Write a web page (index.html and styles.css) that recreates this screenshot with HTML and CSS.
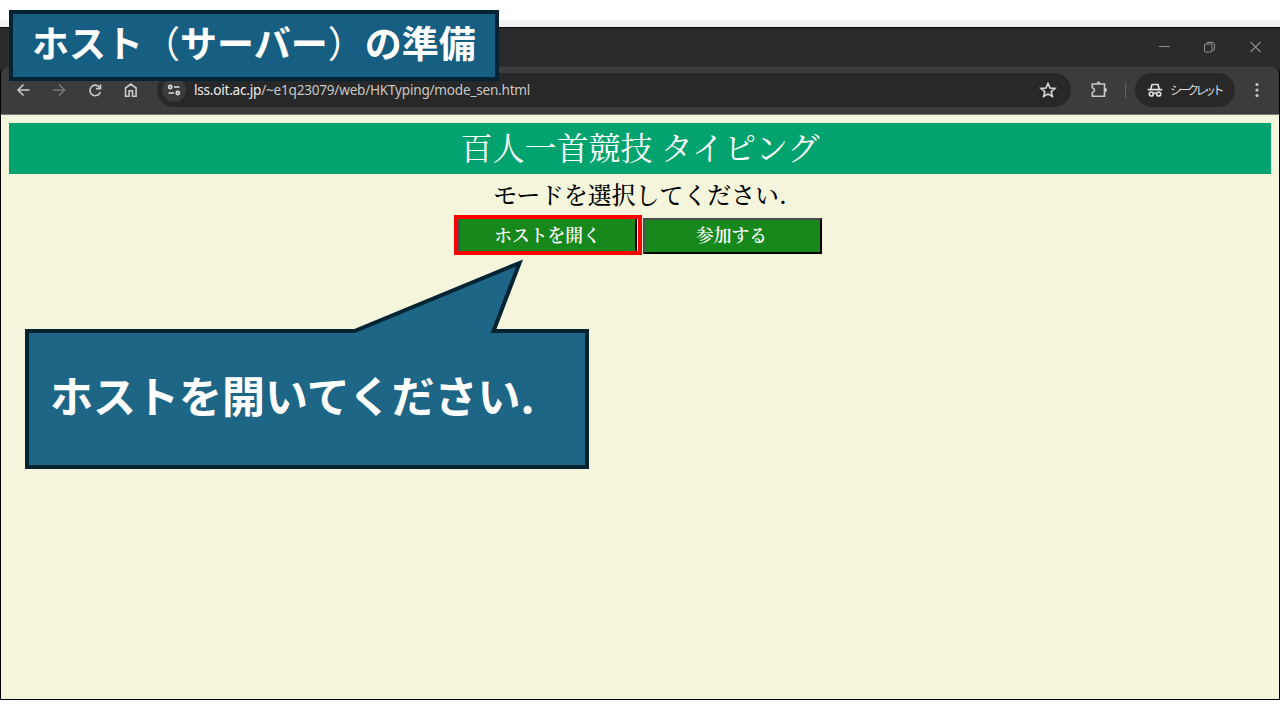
FILE: index.html
```html
<!DOCTYPE html>
<html lang="ja">
<head>
<meta charset="utf-8">
<title>百人一首競技 タイピング</title>
<link rel="stylesheet" href="styles.css">
</head>
<body>
<div class="slide">
  <div class="browser">
    <div class="titlebar">
      <svg class="window-controls" width="110" height="20" viewBox="0 0 110 20" fill="none" stroke="#8b8b8b" stroke-width="1.1">
        <path d="M8 9.500h11M99.500 5l10 10M109.500 5l-10 10"/>
        <rect x="53.500" y="7" width="7.5" height="8" rx="1.5"/>
        <path d="M55.500 6.8C56 5.8 56.500 5.4 57.500 5.4h3a3 3 0 0 1 3 3v3c0 1-.6 1.8-1.8 2.2"/>
      </svg>
    </div>
    <div class="toolbar">
      <svg class="nav" width="140" height="20" viewBox="0 0 140 20" fill="none" stroke="#c8c8c8" stroke-width="1.6">
        <path d="M21.500 10H10M15.500 4.5L10 10l5.500 5.500"/>
        <path stroke="#777" d="M45 10h12M51 4.500L56.500 10 51 15.500"/>
        <path d="M91.500 7.300A5.300 5.300 0 1 0 92.300 12M92.500 4.200V8.600H88"/>
        <path d="M117.500 16.200V8L122.800 4l5.300 4v8.200h-3.600v-5.400h-3.400v5.400z"/>
      </svg>
      <div class="address">
        <span class="site-info"><svg width="14" height="14" viewBox="0 0 14 14" fill="none" stroke="#ddd" stroke-width="1.700"><circle cx="3.200" cy="4" r="1.600"/><path d="M7 4h5.500M1.500 10h5.500"/><circle cx="10.800" cy="10" r="1.600"/></svg></span>
        <span class="url"><b>lss.oit.ac.jp</b>/~e1q23079/web/HKTyping/mode_sen.html</span>
        <svg class="star" width="18" height="18" viewBox="0 0 18 18" fill="none" stroke="#d2d2d2" stroke-width="1.700"><path d="M9 2.500l2 4.500 4.900.4-3.700 3.200 1.100 4.800L9 12.900l-4.300 2.500 1.100-4.800-3.700-3.200 4.900-.4z"/></svg>
      </div>
      <svg class="extension" width="20" height="20" viewBox="0 0 20 20" fill="none" stroke="#c8c8c8" stroke-width="1.600"><path d="M3.300 4h12.200v12.200H3.300v-3.700c2.900-.7 2.900-4 0-4.700z"/><path fill="#c8c8c8" stroke="none" d="M7.500 3.500a2 2 0 0 1 4 0zM16 8a2 2 0 0 1 0 4z"/></svg>
      <span class="divider"></span>
      <div class="incognito">
        <svg width="16" height="16" viewBox="0 0 16 16" fill="none" stroke="#ddd" stroke-width="1.700"><path d="M.7 7.600h14.600M3.800 7L5 2.500h6L12.200 7M6.200 11.500q1.800-1 3.600 0"/><circle cx="4.300" cy="12" r="2"/><circle cx="11.700" cy="12" r="2"/></svg>
        <span class="incognito-label">シークレット</span>
      </div>
      <svg class="more" width="6" height="18" viewBox="0 0 6 18" fill="#c8c8c8"><circle cx="3" cy="3.500" r="1.600"/><circle cx="3" cy="9" r="1.600"/><circle cx="3" cy="14.500" r="1.600"/></svg>
    </div>
    <main class="page">
      <h1 class="heading">百人一首競技 タイピング</h1>
      <p class="message">モードを選択してください.</p>
      <div class="choices">
        <div class="choice-frame"><button class="choice">ホストを開く</button></div>
        <button class="choice">参加する</button>
      </div>
    </main>
  </div>
  <div class="caption">ホスト<span class="paren">（</span>サーバー<span class="paren">）</span>の準備</div>
  <div class="callout">
    <svg width="564" height="210" viewBox="0 0 564 210"><path d="M2 72H329.500L494.500 4 468.500 72H562V208H2z" fill="#1e6686" stroke="#042433" stroke-width="4"/></svg>
    <span class="callout-text">ホストを開いてください.</span>
  </div>
</div>
</body>
</html>
```
FILE: styles.css
```css
* { box-sizing: border-box; }
body { margin: 0; background: #fff; }
svg { display: block; flex: none; }
.slide { position: relative; width: 1280px; height: 720px; overflow: hidden; padding-top: 20px; }
.browser {
  height: 680px;
  border-top: 7px solid #f2f2f2;
  display: flex;
  flex-direction: column;
}
.titlebar {
  height: 40px;
  flex: none;
  background: #2b2b2b;
  border-top: 1px solid #111;
  display: flex;
  justify-content: flex-end;
  padding: 9px 19px 0 0;
}
.window-controls { width: 110px; }
.toolbar {
  height: 48px;
  flex: none;
  background: #3c3c3c;
  border-left: 1px solid #000;
  border-right: 1px solid #000;
  border-bottom: 1px solid #777;
  border-radius: 7px 7px 0 0;
  box-shadow: 0 -7px 0 #2b2b2b;
  display: flex;
  align-items: center;
  padding: 0 0 1px 7px;
}
.address {
  margin-left: 9px;
  width: 914px;
  height: 34px;
  border-radius: 17px;
  background: #282828;
  display: flex;
  align-items: center;
  padding: 0 14px 0 5px;
}
.site-info {
  width: 24px;
  height: 24px;
  border-radius: 50%;
  background: #3c3c3c;
  display: flex;
  align-items: center;
  justify-content: center;
}
.url {
  margin-left: 8px;
  font: 13.600px/20px "Noto Sans", sans-serif;
  letter-spacing: -0.230px;
  color: #c7c7c7;
  white-space: nowrap;
}
.url b { font-weight: 400; color: #eee; }
.star { margin-left: auto; }
.extension { margin-left: 18px; }
.divider { width: 1px; height: 15px; background: #636363; margin: 0 9px 0 16px; }
.incognito {
  width: 100px;
  height: 34px;
  border-radius: 17px;
  background: #282828;
  display: flex;
  align-items: center;
  padding-left: 12px;
  gap: 7px;
}
.incognito-label {
  font: 12px/18px "Noto Sans CJK JP", sans-serif;
  letter-spacing: -3.500px;
  color: #ddd;
  white-space: nowrap;
}
.more { margin-left: 19px; }
.page {
  flex: 1;
  background: #f5f5dc;
  border: solid #000;
  border-width: 0 1px 1px;
  padding: 8px 8px 0;
  font-family: "Noto Serif CJK JP", "Noto Sans CJK JP", serif;
}
.heading {
  margin: 0;
  height: 51px;
  background: #02a36f;
  color: #fff;
  font-size: 32px;
  font-weight: 400;
  line-height: 46px;
  text-align: center;
}
.message { margin: 2px 0 0; height: 36px; font-size: 23.900px; font-weight: 500; line-height: 36px; text-align: center; color: #000; }
.choices { display: flex; align-items: center; margin: 3px 0 0 445px; }
.choice-frame { width: 188px; height: 40px; border: 4px solid #f00; display: flex; background: #f5f5dc; }
.choice {
  width: 180px;
  height: 36px;
  border: 2px outset #000;
  border-color: #4d4d4d #080808 #080808 #4d4d4d;
  border-radius: 0;
  padding: 0;
  background: #16881c;
  color: #fff;
  font: 600 17.800px/30px "Noto Serif CJK JP", "Noto Sans CJK JP", serif;
}
.choices > .choice { width: 179px; margin: 1px 0 0 1px; padding: 0 2px 1px 0; }
.choice-frame .choice { height: 32px; width: 179px; border-top: 0; border-bottom: 0; }
.caption {
  position: absolute;
  left: 9px;
  top: 10px;
  width: 490px;
  height: 71px;
  border: 4px solid #042433;
  background: #165f82;
  color: #fff;
  font: 700 37px/57px "Noto Sans CJK JP", sans-serif;
  padding-left: 19px;
  white-space: nowrap;
}
.paren { font-weight: 400; }
.callout { position: absolute; left: 25px; top: 259px; width: 564px; height: 210px; }
.callout-text {
  position: absolute;
  left: 25px;
  top: 105px;
  color: #fff;
  font: 700 43px/60px "Noto Sans CJK JP", sans-serif;
  white-space: nowrap;
}
```
